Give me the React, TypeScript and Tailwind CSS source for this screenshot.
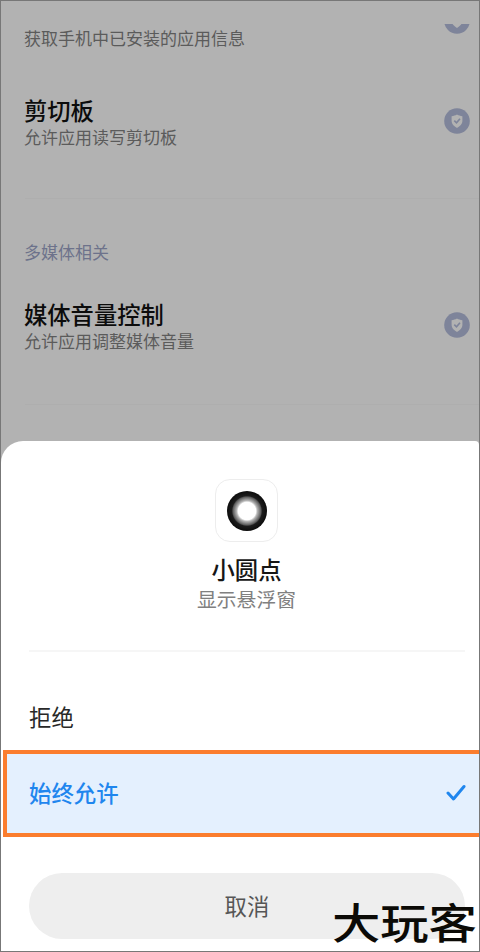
import React from 'react';

interface PermissionRowProps {
  title?: string;
  description: string;
  className?: string;
  clipped?: boolean;
}

const ShieldBadge: React.FC<{ clipped?: boolean }> = ({ clipped }) => (
  <svg
    width="26"
    height={clipped ? 11 : 26}
    viewBox={clipped ? '0 16 26 11' : '0 0 26 26'}
    className={clipped ? '-mt-px shrink-0' : 'mt-3 shrink-0'}
  >
    <circle cx="13" cy="13" r="12.8" fill="#7e849a" />
    <path
      d="M13 6.4c1.8 1 3.3 1.3 5.4 1.9v4.4c0 3.4-2.4 5.4-5.4 7.2-3-1.8-5.4-3.8-5.4-7.2V8.3c2.1-.6 3.6-.9 5.4-1.9z"
      fill="#b2b2b2"
    />
    <path d="M10.3 12.7l2.2 2.1 3.5-4" fill="none" stroke="#7e849a" strokeWidth="1.6" />
  </svg>
);

const PermissionRow: React.FC<PermissionRowProps> = ({ title, description, className = '', clipped }) => (
  <div className={`flex items-start justify-between pl-[23px] pr-[9px] ${className}`}>
    <div>
      {title && <h2 className="text-[23.3px] leading-7 font-medium text-[#0c0c0c]">{title}</h2>}
      <p className="text-[17px] leading-[26px] text-[#5b5b5b]">{description}</p>
    </div>
    <ShieldBadge clipped={clipped} />
  </div>
);

const App: React.FC = () => {
  return (
    <div className="relative flex h-[952px] w-[480px] flex-col overflow-hidden border border-[#777777] bg-[#b2b2b2] font-['Noto_Sans_CJK_SC',sans-serif]">
      {/* Dimmed permission list */}
      <div className="h-[440px] shrink-0">
        <PermissionRow description="获取手机中已安装的应用信息" className="h-[70px] pt-6" clipped />
        <PermissionRow title="剪切板" description="允许应用读写剪切板" className="h-[101px] pt-[25px]" />
        <div className="ml-6 mt-[26px] h-px bg-[#aeaeae]" />
        <h3 className="mt-[40px] pl-[23px] text-[17px] leading-[26px] text-[#6d728b]">多媒体相关</h3>
        <PermissionRow title="媒体音量控制" description="允许应用调整媒体音量" className="h-[103px] pt-[35px]" />
        <div className="ml-6 mt-[36px] h-px bg-[#aeaeae]" />
      </div>

      {/* Bottom sheet */}
      <div className="flex grow flex-col rounded-tl-[22px] rounded-tr-[4px] bg-white">
        <div className="flex flex-col items-center pl-[13px] pt-[38px]">
          <div className="flex size-[63px] items-center justify-center rounded-[15px] border border-[#ededed] bg-white">
            <svg width="42" height="42" viewBox="0 0 42 42">
              <defs>
                <radialGradient id="dot">
                  <stop offset="0.44" stopColor="#fff" />
                  <stop offset="0.52" stopColor="#b4b4b4" />
                  <stop offset="0.7" stopColor="#5c5c5c" />
                  <stop offset="0.76" stopColor="#1c1c1c" />
                  <stop offset="1" stopColor="#0c0c0c" />
                </radialGradient>
              </defs>
              <circle cx="21" cy="21" r="20" fill="url(#dot)" />
            </svg>
          </div>
          <h1 className="mt-3 text-[23.3px] leading-[30px] font-medium text-[#161616]">小圆点</h1>
          <p className="mt-px text-[19.8px] leading-7 text-[#808080]">显示悬浮窗</p>
        </div>
        <div className="ml-7 mr-3.5 mt-[37px] h-[2px] bg-[#f6f6f6]" />

        <button className="mt-[48px] pl-7 text-left text-[22.4px] leading-8 text-[#282828]">拒绝</button>

        <button className="ml-[2px] mt-[18px] flex h-[87px] items-center justify-between border-4 border-r-0 border-[#fb7d2e] bg-[#e4f0fe] pb-px pl-[22px] pr-[13px] text-[22.4px] font-medium text-[#1f86ee]">
          始终允许
          <svg width="20" height="18" viewBox="0 0 20 18" fill="none" stroke="#1f86ee" strokeWidth="3" strokeLinecap="round" strokeLinejoin="round">
            <path d="M2 9l5.5 6L18 2.5" />
          </svg>
        </button>

        <button className="ml-7 mr-3.5 mt-[36px] h-[66px] rounded-full bg-[#eeeeee] text-[22.4px] text-[#565656]">取消</button>
      </div>

      {/* Site mark */}
      <span className="absolute left-[331px] top-[893px] origin-left scale-x-[1.15] text-[42px] leading-[54px] font-medium whitespace-nowrap text-[#0b0a06]">
        大玩客
      </span>
    </div>
  );
};

export default App;
